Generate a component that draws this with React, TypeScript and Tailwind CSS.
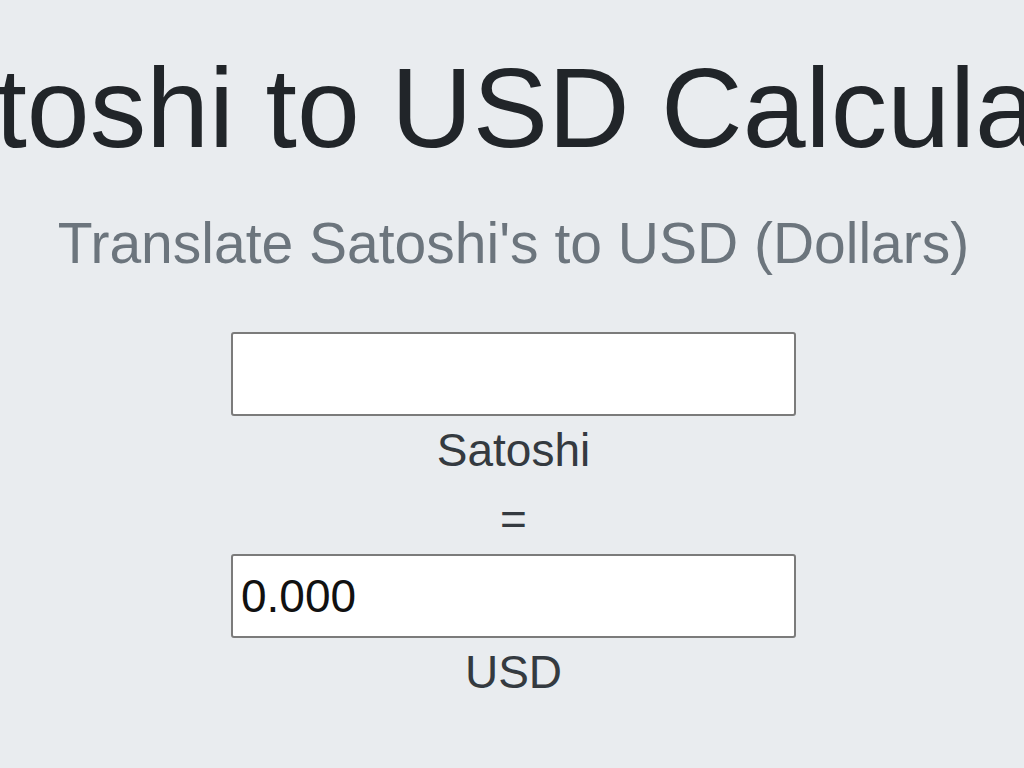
import React, { useState } from "react";

const RATE = 0.0006; // USD per satoshi (placeholder rate)

export default function App() {
  const [sats, setSats] = useState("");
  const usd = ((parseFloat(sats) || 0) * RATE).toFixed(3);

  return (
    <div className="min-h-screen w-full overflow-hidden bg-[#e9ecef] font-['Liberation_Sans',Arial,sans-serif] pl-[3px]">
      {/* Heading */}
      <div className="pt-[41px] flex flex-col items-center text-center">
        <h1 className="whitespace-nowrap text-[113px] leading-[1.2] font-normal text-[#212529]">
          Satoshi to USD Calculator
        </h1>
        <p className="mt-[32px] whitespace-nowrap text-[57px] leading-[1.2] text-[#6c757d]">
          Translate Satoshi's to USD (Dollars)
        </p>
      </div>

      {/* Converter */}
      <div className="mt-[55px] flex flex-col items-center text-[46px] leading-[69px] text-[#343a40]">
        <input
          type="text"
          value={sats}
          onChange={(e) => setSats(e.target.value)}
          className="w-[565px] h-[84px] bg-white border-2 border-[#7b7b7b] rounded-[3px] px-[8px] text-[46px] text-[#111] outline-none"
        />
        <label>Satoshi</label>
        <div>=</div>
        <input
          type="text"
          readOnly
          value={usd}
          className="w-[565px] h-[84px] bg-white border-2 border-[#7b7b7b] rounded-[3px] px-[8px] text-[46px] text-[#111] outline-none"
        />
        <label>USD</label>
      </div>
    </div>
  );
}
